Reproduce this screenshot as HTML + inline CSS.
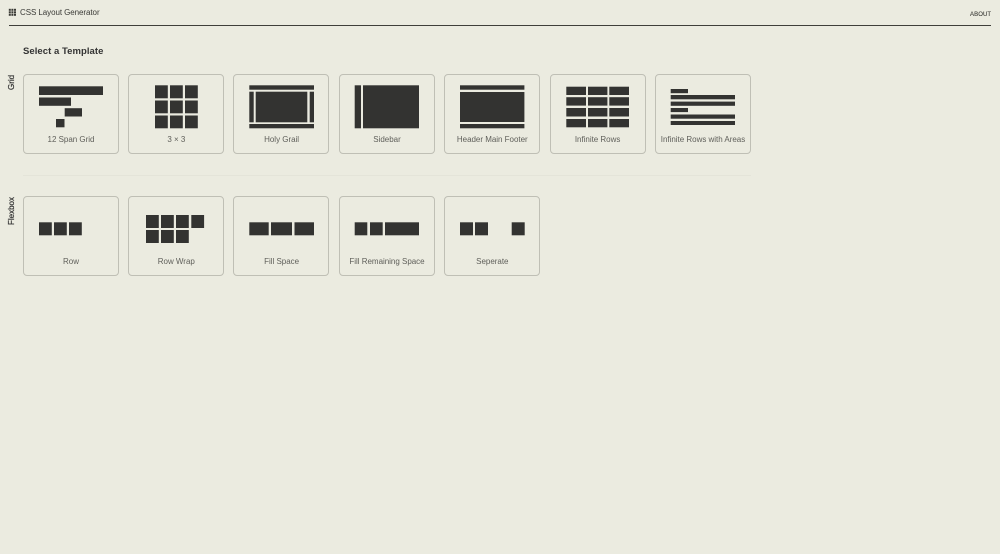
<!DOCTYPE html>
<html>
<head>
<meta charset="utf-8">
<style>
html,body{margin:0;padding:0;width:1000px;height:554px;overflow:hidden;background:#ebebe0;font-family:"Liberation Sans",sans-serif;color:#333}
#w{position:absolute;left:0;top:0;width:1000px;height:554px;filter:blur(.3px)}
.card{position:absolute;width:94px;height:78px;border:1px solid #bfbfb5;border-radius:4px;box-sizing:content-box}
.l{position:absolute;width:96px;text-align:center;font-size:8px;line-height:10px;color:#5f5f5a;letter-spacing:-.02px;white-space:nowrap}
.t{position:absolute;white-space:nowrap}
.v{position:absolute;white-space:nowrap;transform-origin:0 0;transform:rotate(-90deg);font-size:8px;line-height:10px;color:#333;-webkit-text-stroke:.2px #333}
svg{position:absolute;left:0;top:0}
</style>
</head>
<body>
<div id="w">
<div class="t" style="left:20px;top:8px;font-size:8px;line-height:10px;letter-spacing:-.07px;color:#3a3a36">CSS Layout Generator</div>
<div class="t" style="left:970px;top:10.5px;font-size:6px;line-height:9px;letter-spacing:.1px;color:#3a3a36;-webkit-text-stroke:.1px #3a3a36">ABOUT</div>
<div style="position:absolute;left:8.5px;top:24.5px;width:982.5px;height:1px;background:#3f3f3a"></div>
<div class="t" style="left:23px;top:45.7px;font-size:9.5px;line-height:12px;font-weight:bold;letter-spacing:.05px;color:#333">Select a Template</div>
<div class="v" style="left:7px;top:89.5px">Grid</div>
<div class="v" style="left:7px;top:225px">Flexbox</div>
<div style="position:absolute;left:23px;top:175px;width:728px;height:1px;background:#e4e4d9"></div>

<div class="card" style="left:23px;top:74px"></div>
<div class="card" style="left:128.3px;top:74px"></div>
<div class="card" style="left:233.4px;top:74px"></div>
<div class="card" style="left:339px;top:74px"></div>
<div class="card" style="left:444.3px;top:74px"></div>
<div class="card" style="left:549.6px;top:74px"></div>
<div class="card" style="left:655px;top:74px"></div>
<div class="card" style="left:23px;top:196px"></div>
<div class="card" style="left:128.3px;top:196px"></div>
<div class="card" style="left:233.4px;top:196px"></div>
<div class="card" style="left:339px;top:196px"></div>
<div class="card" style="left:444.3px;top:196px"></div>

<div class="l" style="left:23px;top:135px">12 Span Grid</div>
<div class="l" style="left:128.3px;top:135px">3 × 3</div>
<div class="l" style="left:233.6px;top:135px">Holy Grail</div>
<div class="l" style="left:339px;top:135px">Sidebar</div>
<div class="l" style="left:444.3px;top:135px">Header Main Footer</div>
<div class="l" style="left:549.6px;top:135px">Infinite Rows</div>
<div class="l" style="left:655px;top:135px">Infinite Rows with Areas</div>
<div class="l" style="left:23px;top:257px">Row</div>
<div class="l" style="left:128.3px;top:257px">Row Wrap</div>
<div class="l" style="left:233.6px;top:257px">Fill Space</div>
<div class="l" style="left:339px;top:257px">Fill Remaining Space</div>
<div class="l" style="left:444.3px;top:257px">Seperate</div>

<svg width="1000" height="554" viewBox="0 0 1000 554" fill="#333331">
<!-- logo -->
<g fill="#3a3a36">
<rect x="8.8" y="8.8" width="2" height="2"/><rect x="11.4" y="8.8" width="2" height="2"/><rect x="14" y="8.8" width="2" height="2"/>
<rect x="8.8" y="11.3" width="2" height="2"/><rect x="11.4" y="11.3" width="2" height="2"/><rect x="14" y="11.3" width="2" height="2"/>
<rect x="8.8" y="13.8" width="2" height="2"/><rect x="11.4" y="13.8" width="2" height="2"/><rect x="14" y="13.8" width="2" height="2"/>
</g>
<!-- 12 span -->
<rect x="39" y="86.3" width="64" height="8.7"/><rect x="39" y="97.5" width="32" height="8.3"/><rect x="64.7" y="108.2" width="17.3" height="8.3"/><rect x="56" y="119" width="8.5" height="8.3"/>
<!-- 3x3 -->
<rect x="155" y="85.3" width="12.8" height="13"/><rect x="170" y="85.3" width="12.8" height="13"/><rect x="185" y="85.3" width="12.8" height="13"/>
<rect x="155" y="100.5" width="12.8" height="12.8"/><rect x="170" y="100.5" width="12.8" height="12.8"/><rect x="185" y="100.5" width="12.8" height="12.8"/>
<rect x="155" y="115.5" width="12.8" height="12.8"/><rect x="170" y="115.5" width="12.8" height="12.8"/><rect x="185" y="115.5" width="12.8" height="12.8"/>
<!-- holy grail -->
<rect x="249.3" y="85.3" width="64.7" height="4.4"/><rect x="249.3" y="91.7" width="4.4" height="30.6"/><rect x="255.7" y="91.7" width="51.6" height="30.6"/><rect x="309.7" y="91.7" width="4.3" height="30.6"/><rect x="249.3" y="124" width="64.7" height="4.3"/>
<!-- sidebar -->
<rect x="354.7" y="85.3" width="6.3" height="43"/><rect x="363" y="85.3" width="56" height="43"/>
<!-- hmf -->
<rect x="460" y="85.3" width="64.4" height="4.4"/><rect x="460" y="92" width="64.4" height="30"/><rect x="460" y="124" width="64.4" height="4.3"/>
<!-- infinite rows -->
<rect x="566.3" y="86.7" width="19.7" height="8.3"/><rect x="588" y="86.7" width="19.4" height="8.3"/><rect x="609.3" y="86.7" width="19.7" height="8.3"/>
<rect x="566.3" y="97.2" width="19.7" height="8.4"/><rect x="588" y="97.2" width="19.4" height="8.4"/><rect x="609.3" y="97.2" width="19.7" height="8.4"/>
<rect x="566.3" y="108" width="19.7" height="8.5"/><rect x="588" y="108" width="19.4" height="8.5"/><rect x="609.3" y="108" width="19.7" height="8.5"/>
<rect x="566.3" y="119" width="19.7" height="8.3"/><rect x="588" y="119" width="19.4" height="8.3"/><rect x="609.3" y="119" width="19.7" height="8.3"/>
<!-- infinite areas -->
<rect x="670.7" y="89" width="17.3" height="4.2"/><rect x="670.7" y="95" width="64.3" height="4.3"/><rect x="670.7" y="101.6" width="64.3" height="4.2"/><rect x="670.7" y="108" width="17.3" height="4.1"/><rect x="670.7" y="114.5" width="64.3" height="4.2"/><rect x="670.7" y="121" width="64.3" height="4"/>
<!-- row -->
<rect x="39" y="222.3" width="12.8" height="13"/><rect x="54" y="222.3" width="12.8" height="13"/><rect x="69" y="222.3" width="12.8" height="13"/>
<!-- row wrap -->
<rect x="146" y="215" width="12.8" height="13"/><rect x="161" y="215" width="12.8" height="13"/><rect x="176" y="215" width="12.8" height="13"/><rect x="191.3" y="215" width="12.8" height="13"/>
<rect x="146" y="230" width="12.8" height="13"/><rect x="161" y="230" width="12.8" height="13"/><rect x="176" y="230" width="12.8" height="13"/>
<!-- fill space -->
<rect x="249.3" y="222.3" width="19.4" height="13"/><rect x="271" y="222.3" width="21" height="13"/><rect x="294.5" y="222.3" width="19.5" height="13"/>
<!-- fill remaining -->
<rect x="354.7" y="222.3" width="12.6" height="13"/><rect x="370" y="222.3" width="12.7" height="13"/><rect x="385" y="222.3" width="34" height="13"/>
<!-- seperate -->
<rect x="460" y="222.3" width="13" height="13"/><rect x="475" y="222.3" width="13" height="13"/><rect x="511.7" y="222.3" width="13" height="13"/>
</svg>
</div>
</body>
</html>
